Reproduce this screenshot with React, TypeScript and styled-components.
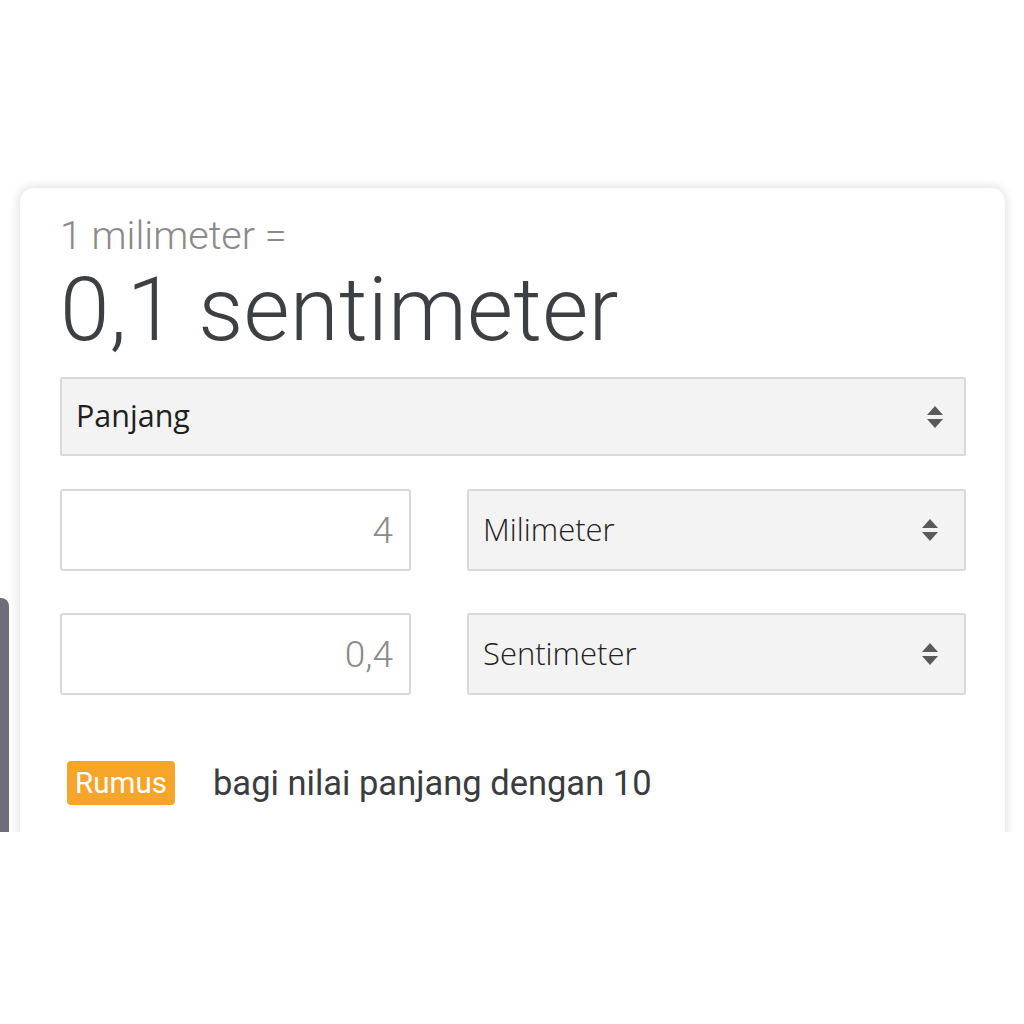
import React from "react";
import styled, { createGlobalStyle } from "styled-components";

const Global = createGlobalStyle`
  html, body { margin: 0; padding: 0; background: #ffffff; }
  body { font-family: Roboto, "Noto Sans", Arial, sans-serif; }
`;

const Viewport = styled.div`
  position: relative;
  height: 832px;
  overflow: hidden;
  padding-top: 188px;
  box-sizing: border-box;
`;

const EdgeBar = styled.div`
  position: absolute;
  left: 0;
  top: 598px;
  width: 9px;
  height: 240px;
  background: #6f6c7b;
  border-top-right-radius: 8px;
`;

const Card = styled.div`
  margin-left: 20px;
  width: 985px;
  min-height: 700px;
  background: #fff;
  border-radius: 14px 14px 0 0;
  box-shadow: 0 0 12px rgba(0, 0, 0, 0.16);
  padding: 28px 39px 0 40px;
  box-sizing: border-box;
`;

const Label = styled.div`
  font-size: 39.5px;
  line-height: 39px;
  font-weight: 300;
  color: #8a8a8a;
`;

const Result = styled.div`
  margin-top: 11px;
  font-size: 89px;
  line-height: 88px;
  font-weight: 300;
  color: #3d3f42;
  letter-spacing: 0.2px;
`;

const SelectBox = styled.div<{ $h: number; $pr: number }>`
  height: ${(p) => p.$h}px;
  box-sizing: border-box;
  background: #f3f3f3;
  border: 2px solid #d9d9d9;
  border-radius: 2px;
  display: flex;
  align-items: center;
  justify-content: space-between;
  padding: 0 ${(p) => p.$pr}px 0 14px;
`;

const TypeText = styled.span`
  font-family: "Open Sans", Roboto, sans-serif;
  font-size: 30.5px;
  color: #1f1f1f;
  margin-top: -3px;
`;

const UnitText = styled.span`
  font-family: "Open Sans", Roboto, sans-serif;
  font-size: 31px;
  font-weight: 300;
  color: #222;
  margin-top: -2px;
`;

const Arrows = () => (
  <svg width="20" height="28" viewBox="0 0 20 28">
    <path d="M10 3 L18 12 L2 12 Z" fill="#5a5a5a" />
    <path d="M10 25 L18 16 L2 16 Z" fill="#5a5a5a" />
  </svg>
);

const TypeSelect = styled.div`
  margin-top: 23px;
`;

const Row = styled.div<{ $mt: number }>`
  margin-top: ${(p) => p.$mt}px;
  display: grid;
  grid-template-columns: 351px 499px;
  justify-content: space-between;
`;

const NumberBox = styled.div`
  height: 82px;
  box-sizing: border-box;
  border: 2px solid #d9d9d9;
  border-radius: 3px;
  display: flex;
  align-items: center;
  justify-content: flex-end;
  padding-right: 16px;
  font-size: 37px;
  font-weight: 300;
  color: #8a8a8a;
`;

const Formula = styled.div`
  margin-top: 66px;
  margin-left: 7px;
  display: flex;
  align-items: center;
  gap: 38px;
`;

const Badge = styled.span`
  display: inline-flex;
  align-items: center;
  justify-content: center;
  width: 108px;
  height: 44px;
  background: #f5a52a;
  border-radius: 4px;
  color: #fff;
  font-size: 29.5px;
`;

const FormulaText = styled.span`
  font-size: 34.5px;
  color: #3a3c3f;
`;

export default function App() {
  return (
    <>
      <Global />
      <Viewport>
        <Card>
          <Label>1 milimeter =</Label>
          <Result>0,1 sentimeter</Result>
          <TypeSelect>
            <SelectBox $h={79} $pr={19}>
              <TypeText>Panjang</TypeText>
              <Arrows />
            </SelectBox>
          </TypeSelect>
          <Row $mt={33}>
            <NumberBox>4</NumberBox>
            <SelectBox $h={82} $pr={24}>
              <UnitText>Milimeter</UnitText>
              <Arrows />
            </SelectBox>
          </Row>
          <Row $mt={42}>
            <NumberBox>0,4</NumberBox>
            <SelectBox $h={82} $pr={24}>
              <UnitText>Sentimeter</UnitText>
              <Arrows />
            </SelectBox>
          </Row>
          <Formula>
            <Badge>Rumus</Badge>
            <FormulaText>bagi nilai panjang dengan 10</FormulaText>
          </Formula>
        </Card>
        <EdgeBar />
      </Viewport>
    </>
  );
}
